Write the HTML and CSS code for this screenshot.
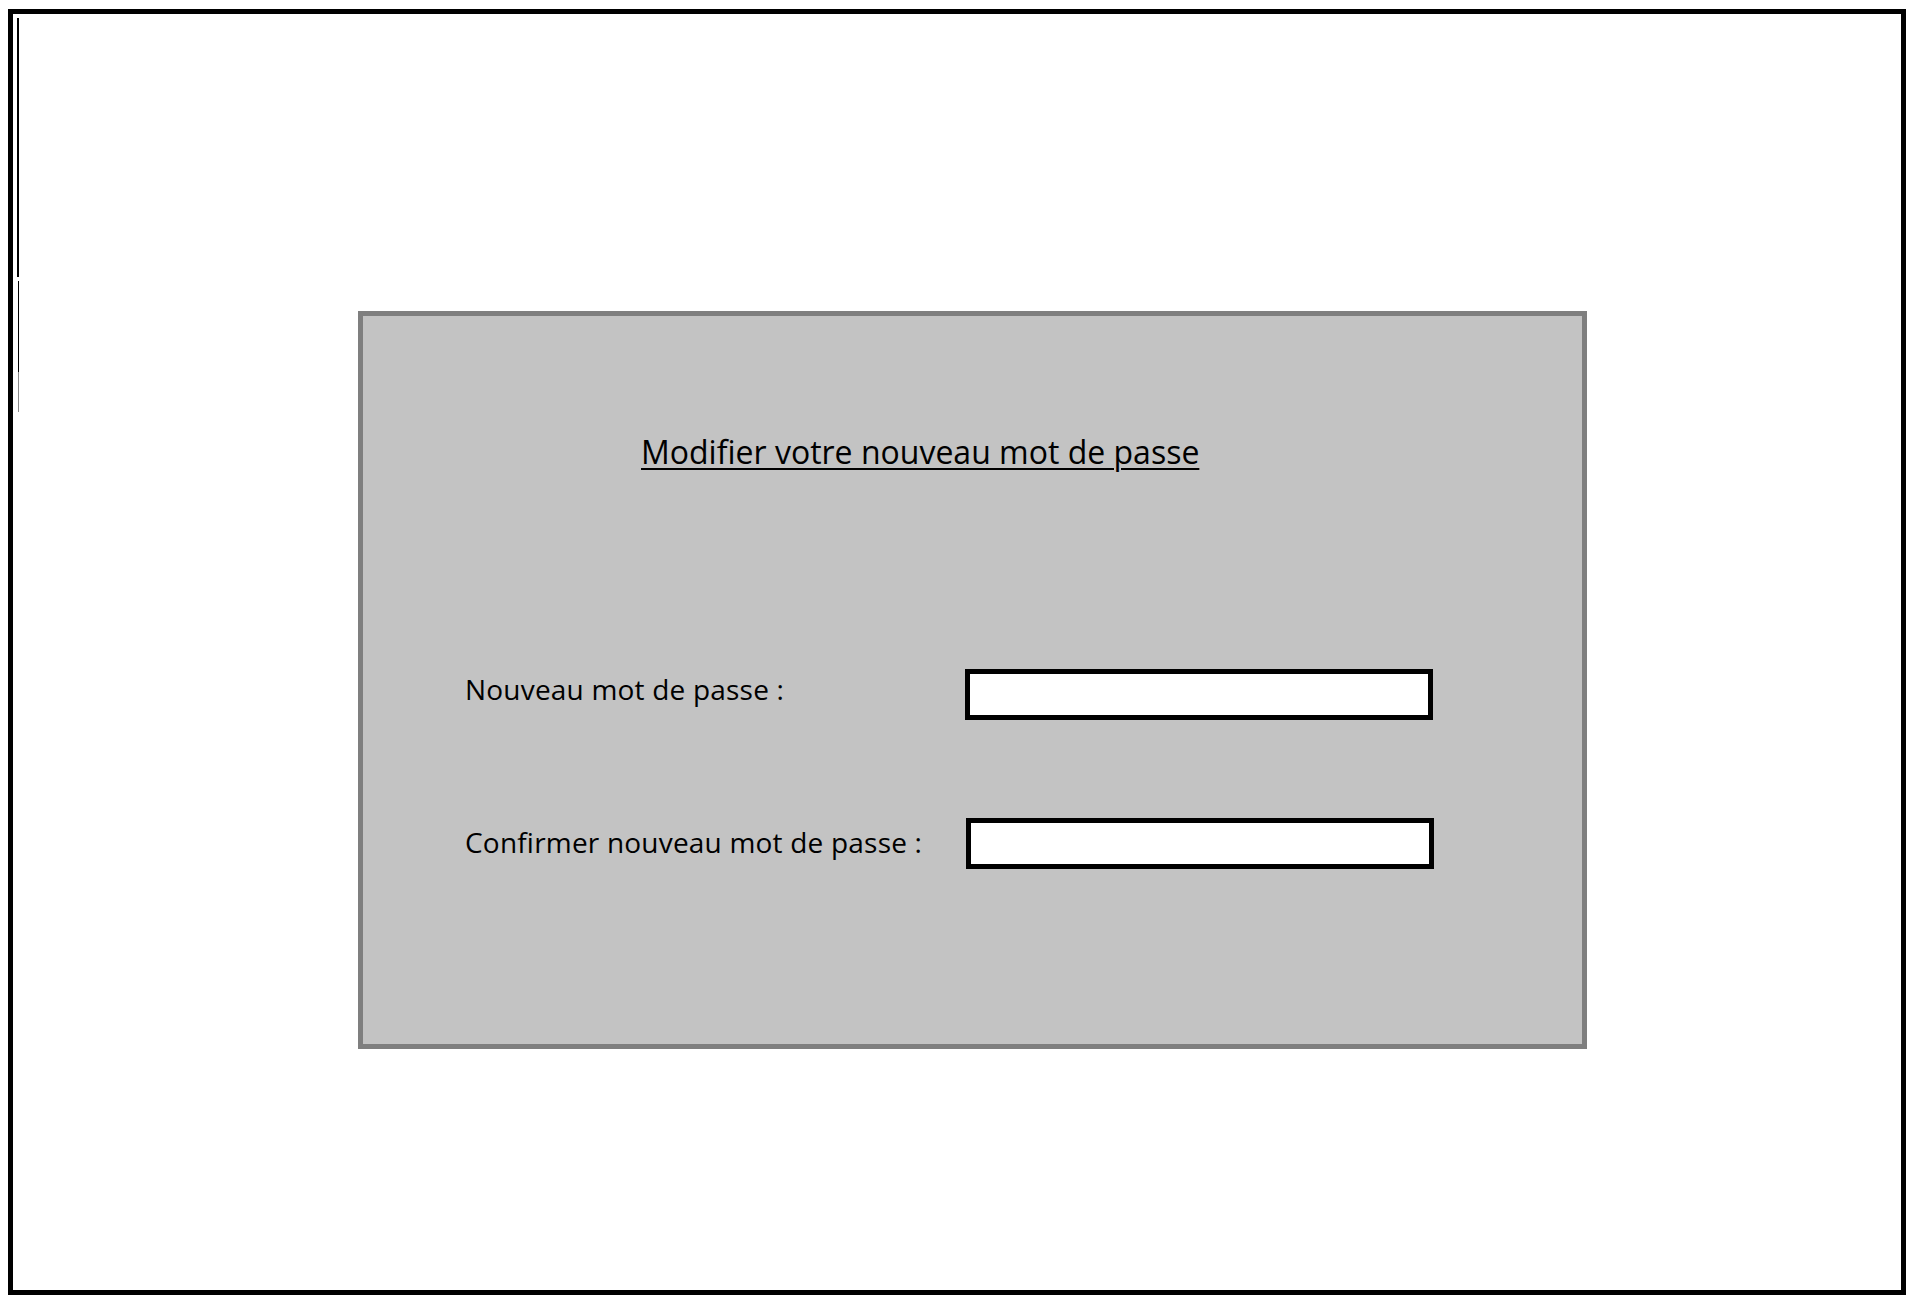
FILE: index.html
```html
<!DOCTYPE html>
<html lang="fr">
<head>
<meta charset="utf-8">
<title>Modifier votre nouveau mot de passe</title>
<link rel="stylesheet" href="styles.css">
</head>
<body>
<div class="frame">
  <div class="strip">
    <span class="seg seg-a"></span>
    <span class="seg seg-b"></span>
    <span class="seg seg-c"></span>
  </div>
  <div class="panel">
    <h1 class="title">Modifier votre nouveau mot de passe</h1>
    <div class="form">
      <label class="label label-1" for="pw1">Nouveau mot de passe :</label>
      <input class="field" id="pw1" type="password">
      <label class="label label-2" for="pw2">Confirmer nouveau mot de passe :</label>
      <input class="field field-2" id="pw2" type="password">
    </div>
  </div>
</div>
</body>
</html>
```

FILE: styles.css
```css
html, body {
  margin: 0;
  padding: 0;
  background: #ffffff;
}
body {
  padding: 9px 0 0 8px;
  font-family: "Open Sans", "Noto Sans", sans-serif;
  color: #000;
}
.frame {
  box-sizing: border-box;
  width: 1898px;
  height: 1286px;
  border: 5px solid #000;
  display: flex;
  align-items: flex-start;
}
.strip {
  display: flex;
  flex-direction: column;
  margin: 4px 0 0 4px;
}
.seg { display: block; }
.seg-a { width: 2px; height: 259px; background: #000; }
.seg-b { width: 1px; height: 91px; margin: 4px 0 0 1px; background: #000; }
.seg-c { width: 1px; height: 40px; margin-left: 1px; background: #8a8a8a; }
.panel {
  box-sizing: border-box;
  width: 1229px;
  height: 738px;
  margin: 297px 0 0 339px;
  border: 5px solid #7f7f7f;
  background: #c3c3c3;
  padding: 0 0 0 102px;
}
.title {
  margin: 117px 0 0 176px;
  font-size: 32px;
  font-weight: normal;
  line-height: 38px;
  text-decoration: underline;
  text-decoration-thickness: 2px;
  text-underline-offset: 4px;
}
.form {
  display: grid;
  grid-template-columns: 500px 468px;
  row-gap: 98px;
  align-items: center;
  margin-top: 198px;
}
.label {
  font-size: 28px;
  line-height: 34px;
  letter-spacing: 0.2px;
}
.label-1 { margin-top: -12px; }
.label-2 { margin-top: -4px; }
.field {
  box-sizing: border-box;
  width: 468px;
  height: 51px;
  margin: 0;
  border: 5px solid #000;
  background: #fff;
  padding: 0;
}
.field-2 { margin-left: 1px; }
```
